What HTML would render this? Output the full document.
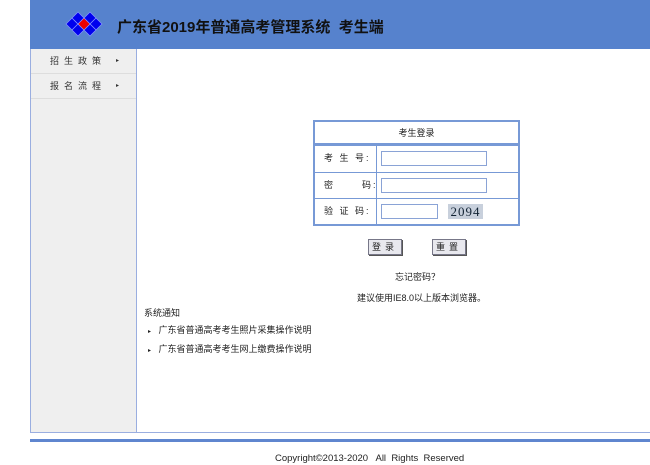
<!DOCTYPE html>
<html><head><meta charset="utf-8"><style>
*{margin:0;padding:0;box-sizing:border-box}
body{width:650px;height:465px;background:#fff;font-family:"Liberation Sans","Noto Sans CJK SC",sans-serif;font-size:9px;color:#222;position:relative;overflow:hidden}
.hdr{position:absolute;left:30px;top:0;width:620px;height:49px;background:#5682cd}
.title{position:absolute;left:117px;top:16px;font-size:15px;font-weight:bold;color:#111;letter-spacing:0}
.side{position:absolute;left:30px;top:49px;width:107px;height:384px;background:#efefef;border-left:1px solid #9aaee0;border-right:1px solid #9aaee0;border-bottom:1px solid #9aaee0}
.side div{height:25px;line-height:24px;border-bottom:1px solid #ddd;padding-left:19px;letter-spacing:5px;color:#333;position:relative}
.side div span{position:absolute;left:85px;top:0;font-size:6px;letter-spacing:0}
.mainb{position:absolute;left:137px;top:432px;width:513px;border-top:1px solid #9aaee0}
.box{position:absolute;left:313px;top:120px;width:207px;height:106px;border:2px solid #7799d6}
.box .h{height:23px;line-height:22px;text-align:center;border-bottom:2px solid #7799d6}
.row{height:26.5px;border-top:1px solid #7799d6;position:relative}
.row:first-of-type{border-top:none}
.lab{position:absolute;left:0;top:0;width:62px;height:100%;border-right:1px solid #7799d6;line-height:25px;padding-left:9px;letter-spacing:2px;white-space:nowrap}
.inp{position:absolute;left:66px;top:5px;width:106px;height:15px;border:1px solid #8aa3d6}
.btn{position:absolute;top:239px;width:34px;height:16px;border:1px solid #778;background:#e8e8ee;text-align:center;line-height:14px;letter-spacing:4px;box-shadow:1px 1px 0 #555}
.t{position:absolute;white-space:nowrap}
</style></head><body>
<div class="hdr"></div>
<svg style="position:absolute;left:0;top:2px" width="120" height="45">
<g fill="#0000ee" stroke="#8899ff" stroke-width=".7">
<polygon points="72,16 78,22 72,28 66,22"/>
<polygon points="78,10 84,16 78,22 72,16"/>
<polygon points="78,22 84,28 78,34 72,28"/>
<polygon points="90,10 96,16 90,22 84,16"/>
<polygon points="96,16 102,22 96,28 90,22"/>
<polygon points="90,22 96,28 90,34 84,28"/>
<polygon points="84,16 90,22 84,28 78,22" fill="#ee0000"/>
</g></svg>
<div class="title">广东省2019年普通高考管理系统&nbsp; 考生端</div>
<div class="side"><div>招生政策<span>▸</span></div><div>报名流程<span>▸</span></div></div>
<div class="mainb"></div>
<div style="position:absolute;left:30px;top:439px;width:620px;height:3px;background:#5f86cf"></div>
<div class="box"><div class="h">考生登录</div>
<div class="row"><div class="lab">考 生 号:</div><div class="inp"></div></div>
<div class="row"><div class="lab">密&nbsp;&nbsp;&nbsp;&nbsp;&nbsp; 码:</div><div class="inp"></div></div>
<div class="row"><div class="lab">验 证 码:</div><div class="inp" style="width:57px"></div><div style="position:absolute;left:133px;top:5px;width:35px;height:15px;background:#c8d0dc;font-family:'Liberation Serif',serif;font-size:13px;line-height:15px;text-align:center;color:#123;letter-spacing:1px">2094</div></div>
</div>
<div class="btn" style="left:368px">登录</div>
<div class="btn" style="left:432px">重置</div>
<div class="t" style="left:395px;top:270px">忘记密码？</div>
<div class="t" style="left:357px;top:291px">建议使用IE8.0以上版本浏览器。</div>
<div class="t" style="left:144px;top:306px">系统通知</div>
<div class="t" style="left:148px;top:323px"><span style="font-size:6px">▸</span>&nbsp;&nbsp; 广东省普通高考考生照片采集操作说明</div>
<div class="t" style="left:148px;top:342px"><span style="font-size:6px">▸</span>&nbsp;&nbsp; 广东省普通高考考生网上缴费操作说明</div>
<div class="t" style="left:275px;top:453px;font-size:9.5px">Copyright©2013-2020&nbsp;&nbsp; All&nbsp; Rights&nbsp; Reserved</div>
</body></html>
